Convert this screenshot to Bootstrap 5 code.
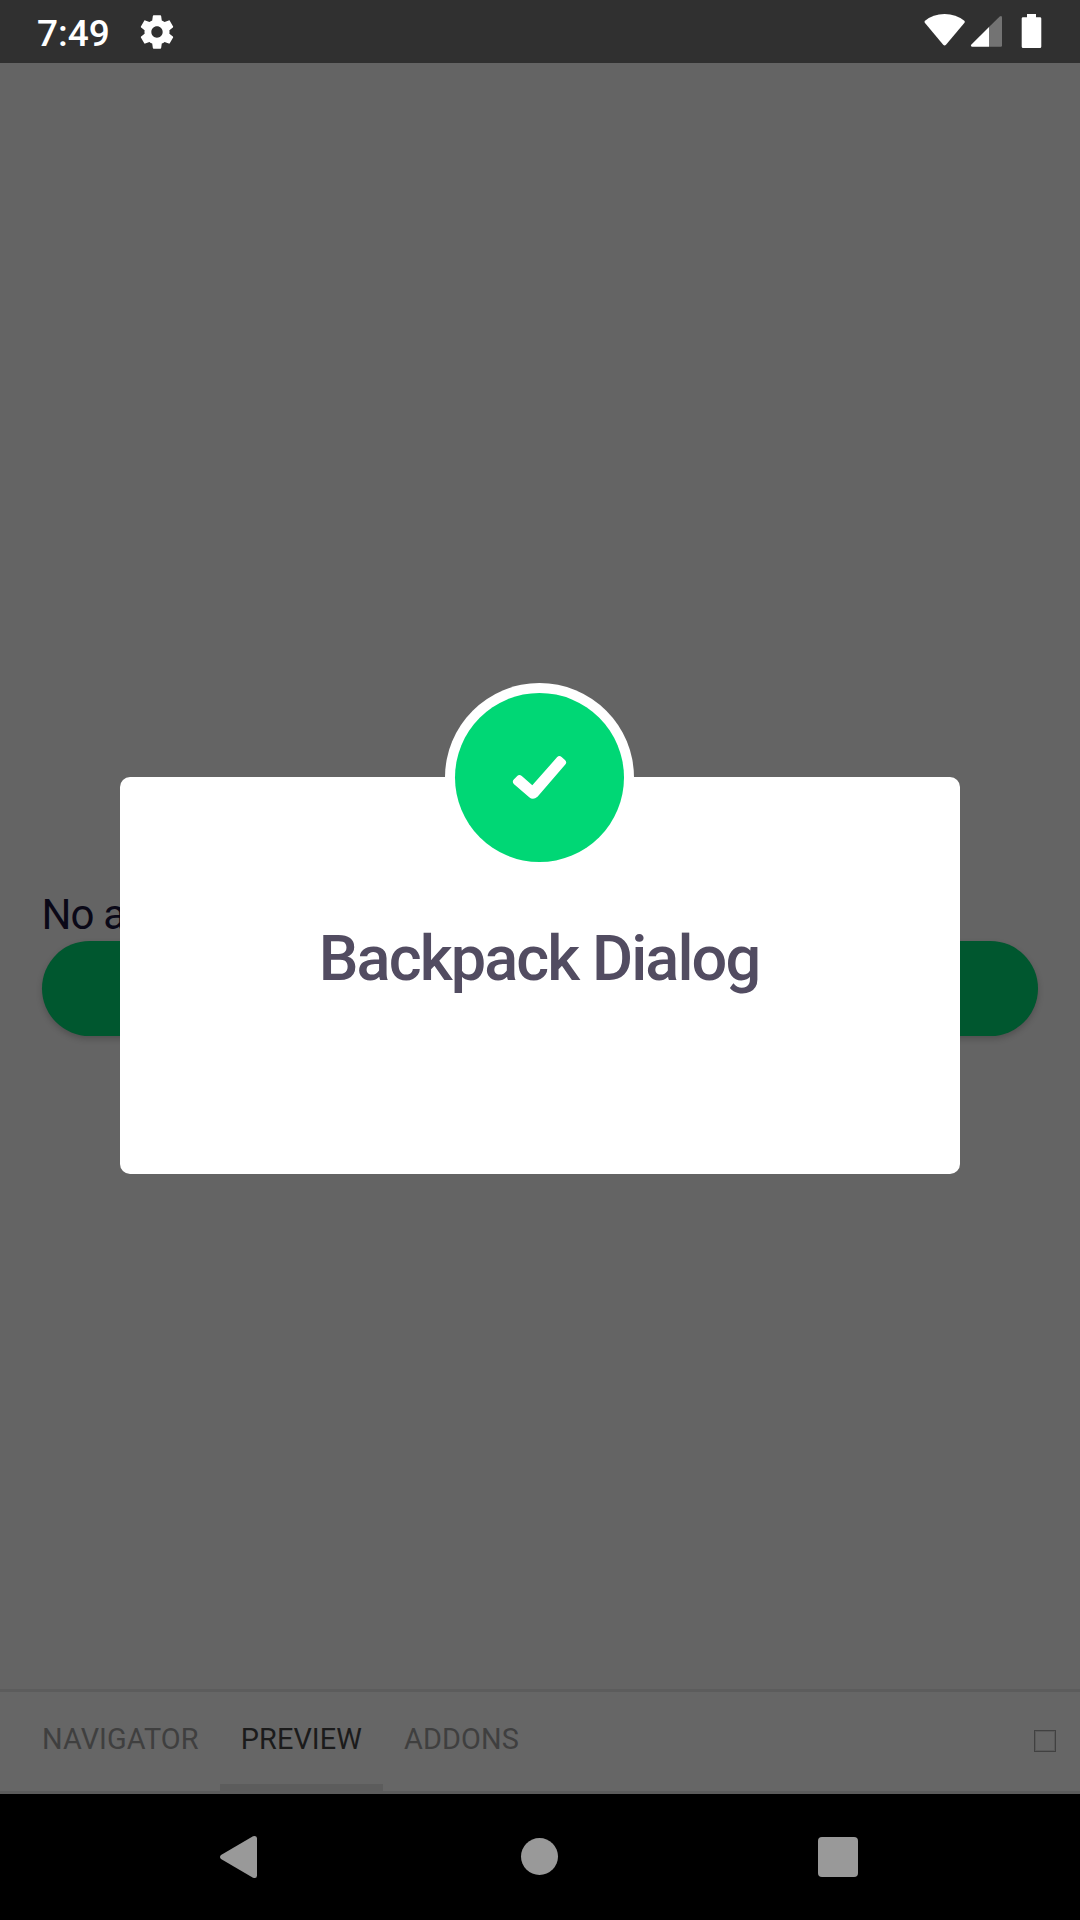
<!DOCTYPE html>
<html lang="en">
<head>
<meta charset="utf-8">
<meta name="viewport" content="width=device-width, initial-scale=1">
<title>Backpack Dialog</title>
<link href="https://cdn.jsdelivr.net/npm/bootstrap@5.3.0/dist/css/bootstrap.min.css" rel="stylesheet">
<style>
  body { font-family: Roboto, "Liberation Sans", sans-serif; background: #646464; }
  svg { display: block; flex: none; }
  .screen { width: 1080px; height: 1920px; }
  .status { height: 63px; background: #303030; padding-left: 37px; padding-right: 38px; }
  .clock { font-size: 37px; line-height: 63px; font-weight: 500; width: 100px; padding-top: 3px; }
  .story { padding: 0 42px; padding-top: 827px; }
  .story-text { font-size: 42px; line-height: 50px; color: #0a0817; letter-spacing: -.9px; margin-bottom: 1px; margin-left: -.5px; }
  .story-btn { height: 95px; background: #00572f; box-shadow: 0 3px 6px rgba(0,0,0,.2); border: 0; }
  .tabs { height: 105px; background: #666; border-top: 3px solid #5c5c5c; border-bottom: 3px solid #5c5c5c; padding-left: 21px; padding-right: 24px; }
  .tab-item { font-size: 28.875px; line-height: 34px; letter-spacing: .1px; color: #3f3f3f; padding: 2px 21px 0; border: 0; border-bottom: 7px solid transparent; background: none; }
  .tab-item.active { color: #1b1b1b; border-bottom-color: #5c5c5c; }
  .box-glyph { width: 22px; height: 22px; border: 1px solid #414141; box-shadow: inset 0 0 0 1px #5a5a5a; margin-top: -1px; }
  .android-nav { height: 126px; }
  .dialog-layer { inset: 0; padding-top: 777px; }
  .dialog-panel { width: 840px; height: 397px; border-radius: 10px; }
  .dialog-icon { width: 189px; height: 189px; top: -94px; left: 325px; }
  .dialog-title { font-size: 63px; line-height: 74px; font-weight: 500; color: #524c61; letter-spacing: -1.89px; padding-top: 145px; padding-right: 2px; }
</style>
</head>
<body>
<div class="screen position-relative d-flex flex-column overflow-hidden">
  <header class="status d-flex align-items-center text-white">
    <span class="clock">7:49</span>
    <svg width="40" height="40" viewBox="0 0 24 24" fill="#fff"><path d="M19.43 12.98c.04-.32.07-.64.07-.98s-.03-.66-.07-.98l2.11-1.65c.19-.15.24-.42.12-.64l-2-3.46c-.12-.22-.39-.3-.61-.22l-2.49 1c-.52-.4-1.08-.73-1.69-.98l-.38-2.65C14.46 2.18 14.25 2 14 2h-4c-.25 0-.46.18-.49.42l-.38 2.65c-.61.25-1.17.59-1.69.98l-2.49-1c-.23-.09-.49 0-.61.22l-2 3.46c-.13.22-.07.49.12.64l2.11 1.65c-.04.32-.07.65-.07.98s.03.66.07.98l-2.11 1.65c-.19.15-.24.42-.12.64l2 3.46c.12.22.39.3.61.22l2.49-1c.52.4 1.08.73 1.69.98l.38 2.65c.03.24.24.42.49.42h4c.25 0 .46-.18.49-.42l.38-2.65c.61-.25 1.17-.59 1.69-.98l2.49 1c.23.09.49 0 .61-.22l2-3.46c.12-.22.07-.49-.12-.64l-2.11-1.65zM12 15.4c-1.88 0-3.4-1.52-3.4-3.4s1.52-3.4 3.4-3.4 3.4 1.52 3.4 3.4-1.52 3.4-3.4 3.4z"/></svg>
    <svg class="ms-auto" width="122" height="63" viewBox="920 0 122 63">
      <path fill="#fff" d="M924.8 22.8Q924 21.8 925 20.8Q933 14 944.6 14Q956 14 964.3 20.8Q965.3 21.8 964.5 22.8L946 44.8Q944.6 46.4 943.2 44.8Z"/>
      <path fill="#737373" d="M989 27L999.7 16.4Q1002 15 1002 17.5V45.5Q1002 46.7 1000.8 46.7H989Z"/>
      <path fill="#fff" d="M989 27V46.7H972Q970 46.2 971.2 44.8Z"/>
      <path fill="#fff" d="M1027 14H1036V17.3H1040Q1041.3 17.3 1041.3 18.6V46.5Q1041.3 48 1040 48H1023.1Q1021.7 48 1021.7 46.5V18.6Q1021.7 17.3 1023 17.3H1027Z"/>
    </svg>
  </header>
  <main class="story flex-grow-1">
    <div class="story-text">No a</div>
    <button class="story-btn d-block w-100 rounded-pill" type="button" aria-label="Open"></button>
  </main>
  <nav class="tabs d-flex align-items-center">
    <div class="d-flex align-self-stretch">
      <button class="tab-item" type="button">NAVIGATOR</button>
      <button class="tab-item active" type="button">PREVIEW</button>
      <button class="tab-item" type="button">ADDONS</button>
    </div>
    <span class="box-glyph ms-auto"></span>
  </nav>
  <footer class="android-nav bg-black">
    <svg width="1080" height="126" viewBox="0 1794 1080 126" fill="#999">
      <path d="M221 1855L253 1836.3Q257 1835 257 1838.5V1875.5Q257 1879 253 1877.7L221 1859Q219 1857 221 1855Z"/>
      <circle cx="539.5" cy="1856.5" r="18.5"/>
      <rect x="818" y="1837" width="40" height="40" rx="4"/>
    </svg>
  </footer>

  <div class="dialog-layer position-absolute d-flex justify-content-center align-items-start">
    <section class="dialog-panel bg-white position-relative text-center" role="dialog" aria-modal="true">
      <svg class="dialog-icon position-absolute" viewBox="0 0 189 189">
        <circle cx="94.5" cy="94.5" r="94.5" fill="#fff"/>
        <circle cx="94.5" cy="94.5" r="84.5" fill="#00d775"/>
        <path fill="#fff" d="M72.2 92.9Q74.4 91 76.8 93L87.3 102.3L112 74.3Q114.2 71.8 116.6 74L120 77Q122.3 79.2 120.3 81.5L92.5 113.8Q88 117.5 84.2 114.2L68.8 100.9Q66.8 98.7 68.8 96.5Z"/>
      </svg>
      <h1 class="dialog-title m-0">Backpack Dialog</h1>
    </section>
  </div>
</div>
<script src="https://cdn.jsdelivr.net/npm/bootstrap@5.3.0/dist/js/bootstrap.bundle.min.js"></script>
</body>
</html>
